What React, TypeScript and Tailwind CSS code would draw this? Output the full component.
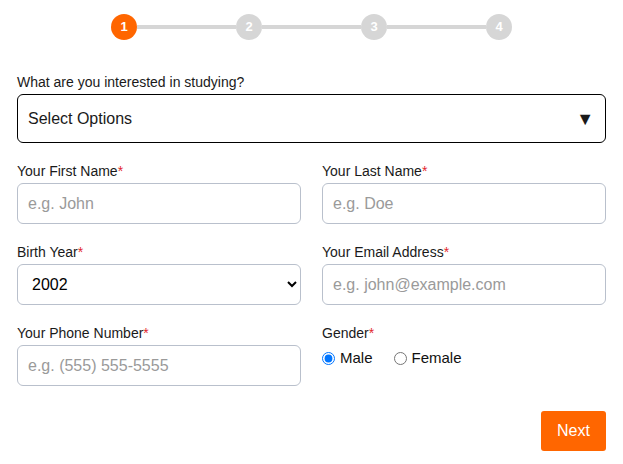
import React, { useState } from 'react';

const steps = [1, 2, 3, 4];

function Stepper({ current }: { current: number }) {
  return (
    <div className="flex items-center justify-center pt-[14px]">
      {steps.map((s, i) => (
        <React.Fragment key={s}>
          {i > 0 && <div className="h-[4px] w-[99px] bg-[#d6d6d6]" />}
          <div
            className={
              s === current
                ? 'flex h-[26px] w-[26px] items-center justify-center rounded-full bg-[#ff6600] text-[13px] font-bold text-white'
                : 'flex h-[26px] w-[26px] items-center justify-center rounded-full bg-[#d6d6d6] text-[13px] font-bold text-white'
            }
          >
            {s}
          </div>
        </React.Fragment>
      ))}
    </div>
  );
}

function Label({ children, required }: { children: React.ReactNode; required?: boolean }) {
  return (
    <label className="mb-[4px] block text-[14px] leading-[16px] text-[#1a1a1a]">
      {children}
      {required && <span className="text-[#e3262e]">*</span>}
    </label>
  );
}

function TextField({ label, placeholder }: { label: string; placeholder: string }) {
  return (
    <div>
      <Label required>{label}</Label>
      <input
        type="text"
        placeholder={placeholder}
        className="block h-[41px] w-full rounded-[6px] border border-[#b9c0cc] bg-white px-[10px] text-[16px] text-[#1a1a1a] outline-none placeholder:text-[#9a9a9a]"
      />
    </div>
  );
}

export default function App() {
  const [gender, setGender] = useState('male');
  const [year, setYear] = useState('2002');

  return (
    <div className="h-[464px] w-[623px] bg-white font-['Liberation_Sans',Arial,sans-serif]">
      <Stepper current={1} />

      <form className="px-[17px] pt-[34px]" onSubmit={(e) => e.preventDefault()}>
        <Label>What are you interested in studying?</Label>
        <div className="flex h-[49px] items-center justify-between rounded-[6px] border border-black pl-[10px] pr-[11px] text-[16px] text-[#1a1a1a]">
          <span>Select Options</span>
          <span className="text-[18px] leading-none">▼</span>
        </div>

        <div className="mt-[20px] grid grid-cols-2 gap-x-[21px] gap-y-[20px]">
          <TextField label="Your First Name" placeholder="e.g. John" />
          <TextField label="Your Last Name" placeholder="e.g. Doe" />

          <div>
            <Label required>Birth Year</Label>
            <select
              value={year}
              onChange={(e) => setYear(e.target.value)}
              className="block h-[41px] w-full rounded-[6px] border border-[#b9c0cc] bg-white px-[10px] text-[16px] text-black outline-none"
            >
              {Array.from({ length: 20 }, (_, i) => 2010 - i).map((y) => (
                <option key={y} value={String(y)}>
                  {y}
                </option>
              ))}
            </select>
          </div>
          <TextField label="Your Email Address" placeholder="e.g. john@example.com" />

          <TextField label="Your Phone Number" placeholder="e.g. (555) 555-5555" />
          <div>
            <Label required>Gender</Label>
            <div className="mt-[6px] flex items-center text-[15px] text-[#111]">
              <label className="flex items-center">
                <input
                  type="radio"
                  name="gender"
                  checked={gender === 'male'}
                  onChange={() => setGender('male')}
                  className="m-0 h-[13px] w-[13px] accent-[#0075ff]"
                />
                <span className="ml-[5px]">Male</span>
              </label>
              <label className="ml-[21px] flex items-center">
                <input
                  type="radio"
                  name="gender"
                  checked={gender === 'female'}
                  onChange={() => setGender('female')}
                  className="m-0 h-[13px] w-[13px] accent-[#0075ff]"
                />
                <span className="ml-[5px]">Female</span>
              </label>
            </div>
          </div>
        </div>

        <div className="mt-[25px] flex justify-end">
          <button
            type="submit"
            className="h-[40px] w-[65px] rounded-[3px] bg-[#ff6600] text-[16px] text-white"
          >
            Next
          </button>
        </div>
      </form>
    </div>
  );
}
